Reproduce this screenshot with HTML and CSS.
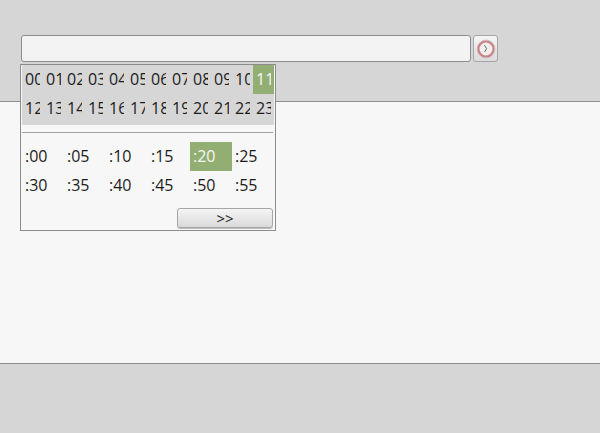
FILE: index.html
```html
<!DOCTYPE html>
<html lang="en">
<head>
<meta charset="utf-8">
<title>Time picker</title>
<link rel="stylesheet" href="styles.css">
</head>
<body>
<div class="page">
  <header class="top">
    <div class="field-row">
      <input class="field" type="text">
      <button class="clock-btn" type="button" aria-label="Pick time">
        <svg width="20" height="20" viewBox="0 0 20 20">
          <circle cx="10" cy="10" r="7.6" fill="#f1eeec" stroke="#cc8286" stroke-width="2.2"/>
          <circle cx="10" cy="10" r="9" fill="none" stroke="#c4bebe" stroke-width="0.8"/>
          <path d="M8.4 6.2 L10.6 9.6 L8.6 13" fill="none" stroke="#6a6a6a" stroke-width="1"/>
        </svg>
      </button>
    </div>
  </header>
  <main class="middle"></main>
  <footer class="bottom"></footer>
  <div class="popup">
    <div class="hours">
      <div class="hour"><span>00</span></div><div class="hour"><span>01</span></div><div class="hour"><span>02</span></div><div class="hour"><span>03</span></div><div class="hour"><span>04</span></div><div class="hour"><span>05</span></div><div class="hour"><span>06</span></div><div class="hour"><span>07</span></div><div class="hour"><span>08</span></div><div class="hour"><span>09</span></div><div class="hour"><span>10</span></div><div class="hour on"><span>11</span></div>
      <div class="hour"><span>12</span></div><div class="hour"><span>13</span></div><div class="hour"><span>14</span></div><div class="hour"><span>15</span></div><div class="hour"><span>16</span></div><div class="hour"><span>17</span></div><div class="hour"><span>18</span></div><div class="hour"><span>19</span></div><div class="hour"><span>20</span></div><div class="hour"><span>21</span></div><div class="hour"><span>22</span></div><div class="hour"><span>23</span></div>
    </div>
    <hr class="sep">
    <div class="minutes">
      <div class="minute">:00</div><div class="minute">:05</div><div class="minute">:10</div><div class="minute">:15</div><div class="minute on">:20</div><div class="minute">:25</div>
      <div class="minute">:30</div><div class="minute">:35</div><div class="minute">:40</div><div class="minute">:45</div><div class="minute">:50</div><div class="minute">:55</div>
    </div>
    <div class="actions"><button class="next" type="button">&gt;&gt;</button></div>
  </div>
</div>
</body>
</html>
```
FILE: styles.css
```css
* { box-sizing: border-box; }
html, body { margin: 0; height: 100%; }
body {
  font-family: "Open Sans", "Noto Sans", sans-serif;
  font-size: 16px;
  color: #1c1c1c;
  background: #d6d6d6;
  overflow: hidden;
}
.page {
  position: relative;
  height: 433px;
  display: flex;
  flex-direction: column;
}
.top {
  height: 102px;
  background: #d6d6d6;
  border-bottom: 1px solid #8f8f8f;
  padding: 35px 0 0 21px;
}
.field-row { display: flex; gap: 2px; }
.field {
  width: 450px;
  height: 27px;
  margin: 0;
  background: #f3f3f3;
  border: 1px solid #8c8c8c;
  border-radius: 3px;
  padding: 0 4px;
  outline: none;
}
.clock-btn {
  width: 25px;
  height: 27px;
  margin: 0;
  padding: 0;
  display: flex;
  align-items: center;
  justify-content: center;
  border: 1px solid #a6a6a6;
  border-radius: 3px;
  background: linear-gradient(#f5f5f5, #dcdcdc);
}
.middle { flex: 1; background: #f7f7f7; }
.bottom {
  height: 70px;
  background: #d6d6d6;
  border-top: 1px solid #8f8f8f;
}
.popup {
  position: absolute;
  left: 20px;
  top: 64px;
  width: 256px;
  height: 167px;
  background: #f7f7f7;
  border: 1px solid #8c8c8c;
  padding: 0 1px;
}
.hours {
  display: grid;
  grid-template-columns: repeat(12, 21px);
  grid-template-rows: 29px 31px;
  background: #d6d6d6;
}
.hour {
  padding: 4px 3px 0;
  line-height: 21px;
}
.hour span {
  display: block;
  width: 15px;
  overflow: hidden;
  white-space: nowrap;
}
.on { background: #93ae72; color: #f7f7f7; }
.sep {
  margin: 7px 1px 0 0;
  border: 0;
  height: 1px;
  background: #a0a0a0;
}
.minutes {
  margin-top: 9px;
  display: grid;
  grid-template-columns: repeat(6, 42px);
  grid-auto-rows: 29px;
}
.minute {
  padding-left: 3px;
  line-height: 29px;
}
.actions {
  margin-top: 8px;
  display: flex;
  justify-content: flex-end;
  padding-right: 1px;
}
.next {
  width: 96px;
  height: 20px;
  margin: 0;
  padding: 0;
  font: inherit;
  font-size: 15px;
  line-height: 16px;
  color: #1c1c1c;
  border: 1px solid #a6a6a6;
  border-radius: 3px;
  background: linear-gradient(#f5f5f5, #dadada);
  box-shadow: 0 1px 0 #bdbdbd;
}
```
